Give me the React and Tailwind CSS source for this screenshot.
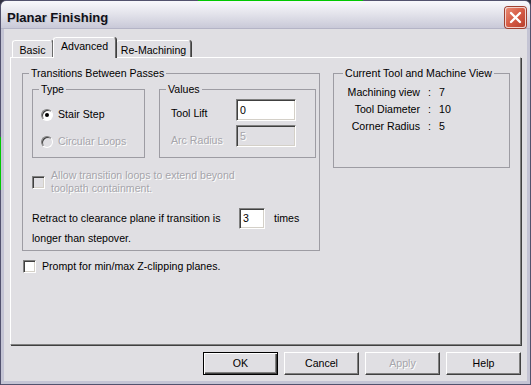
import React from 'react';

const disabled = 'text-[#a6a5ab] [text-shadow:1px_1px_0_#ffffff]';

function GroupBox({ title, className = '', legendClass = 'ml-[6px]', children }) {
  return (
    <fieldset className={`border border-[#9d9ca3] p-0 m-0 min-w-0 ${className}`}>
      <legend className={`${legendClass} px-[2px] leading-[13px]`}>{title}</legend>
      {children}
    </fieldset>
  );
}

function Radio({ checked, off, label }) {
  return (
    <div className="flex items-center h-[13px] gap-[5px]">
      <span
        className={`relative w-[12px] h-[12px] rounded-full border border-t-[#808080] border-l-[#808080] border-r-white border-b-white shadow-[inset_1px_1px_0_#404040] flex items-center justify-center ${
          off ? 'bg-[#e0dfe3]' : 'bg-white'
        }`}
      >
        {checked && <span className="w-[4px] h-[4px] rounded-full bg-black" />}
      </span>
      <span className={off ? disabled : ''}>{label}</span>
    </div>
  );
}

function Check({ off }) {
  return (
    <span
      className={`shrink-0 w-[13px] h-[13px] border border-t-[#808080] border-l-[#808080] border-r-white border-b-white shadow-[inset_1px_1px_0_#404040,inset_-1px_-1px_0_#d4d0c8] ${
        off ? 'bg-[#e0dfe3]' : 'bg-white'
      }`}
    />
  );
}

function Field({ value, off, className = '' }) {
  return (
    <div
      className={`border border-t-[#808080] border-l-[#808080] border-r-white border-b-white shadow-[inset_1px_1px_0_#404040,inset_-1px_-1px_0_#d4d0c8] pl-[3px] ${
        off ? `bg-[#e0dfe3] ${disabled}` : 'bg-white'
      } ${className}`}
    >
      {value}
    </div>
  );
}

function Button({ label, primary, off }) {
  return (
    <button
      className={`w-[75px] h-[23px] text-center leading-[19px] bg-[#e0dfe3] ${
        primary
          ? 'border border-black shadow-[inset_1px_1px_0_#ffffff,inset_-1px_-1px_0_#404040,inset_-2px_-2px_0_#808080]'
          : 'border border-t-white border-l-white border-r-[#404040] border-b-[#404040] shadow-[inset_-1px_-1px_0_#808080]'
      }`}
    >
      <span className={off ? disabled : ''}>{label}</span>
    </button>
  );
}

function Tab({ label, active, className = '' }) {
  return (
    <div
      className={`whitespace-nowrap text-center rounded-t-[3px] border-t border-l border-r border-t-white border-l-white border-r-[#6a6a6a] shadow-[1px_0_0_#404040] bg-[#e0dfe3] ${
        active ? 'h-[21px] -mb-px relative z-10 pt-[2px]' : 'h-[17px] pt-[3px]'
      } ${className}`}
    >
      {label}
    </div>
  );
}

export default function App() {
  return (
    <div className="relative w-[531px] h-[385px] bg-[#303040] [font-family:Liberation_Sans,Arial,sans-serif] text-[10.6px] leading-[13px] text-black">
      <div className="w-[531px] h-[385px] flex flex-col border border-[#52526e] rounded-t-[6px] overflow-hidden">
        {/* Title bar */}
        <div className="h-[28px] shrink-0 flex items-start justify-between pl-[6px] pr-[4px] pt-[6px] bg-gradient-to-b from-[#f8f8fc] via-[#e2e2ea] to-[#c9c9d8] border-b border-[#b4b4c6]">
          <span className="font-bold text-[13px] leading-[21px] text-[#101018] [text-shadow:1px_1px_0_#c8c8d0]">
            Planar Finishing
          </span>
          <span className="w-[21px] h-[21px] rounded-[3px] border border-[#f2d2cc] bg-gradient-to-br from-[#e88a74] via-[#d55a44] to-[#b8402e] shadow-[0_0_0_1px_#a04030] flex items-center justify-center">
            <svg width="13" height="13" viewBox="0 0 13 13">
              <path d="M2 2 L11 11 M11 2 L2 11" stroke="#ffffff" strokeWidth="2.4" strokeLinecap="round" />
            </svg>
          </span>
        </div>

        {/* Dialog body */}
        <div className="flex-1 flex flex-col bg-[#e0dfe3] border-x-[3px] border-b-[3px] border-[#c4c4d4] pt-[8px] px-[6px] pb-[6px]">
          {/* Tabs */}
          <div className="h-[20px] flex items-end pl-[2px]">
            <Tab label="Basic" className="w-[41px]" />
            <Tab label="Advanced" active className="w-[63px]" />
            <Tab label="Re-Machining" className="w-[75px]" />
          </div>

          {/* Tab panel */}
          <div className="h-[288px] border border-t-white border-l-white border-r-[#808080] border-b-[#808080] shadow-[1px_1px_0_#404040] pt-[9px] pl-[11px] flex items-start gap-[13px]">
            <div className="flex flex-col w-[298px]">
              <GroupBox title="Transitions Between Passes" className="w-[298px] h-[184px]">
                <div className="pl-[9px] flex flex-col">
                  <div className="flex gap-[14px] mt-[3px]">
                    <GroupBox title="Type" className="w-[113px] h-[75px]">
                      <div className="pl-[8px] pt-[12px] flex flex-col gap-[14px]">
                        <Radio checked label="Stair Step" />
                        <Radio off label="Circular Loops" />
                      </div>
                    </GroupBox>
                    <GroupBox title="Values" className="w-[157px] h-[75px]">
                      <div className="pl-[11px] pt-[3px] grid grid-cols-[65px_60px] gap-y-[4px]">
                        <span className="pt-[8px]">Tool Lift</span>
                        <Field value="0" className="h-[22px] leading-[20px]" />
                        <span className={`pt-[9px] ${disabled}`}>Arc Radius</span>
                        <Field value="5" off className="h-[22px] leading-[20px]" />
                      </div>
                    </GroupBox>
                  </div>

                  <div className="flex items-center gap-[6px] mt-[11px]">
                    <Check off />
                    <span className={disabled}>
                      Allow transition loops to extend beyond
                      <br />
                      toolpath containment.
                    </span>
                  </div>

                  <div className="flex items-center mt-[13px]">
                    <span className="w-[207px]">Retract to clearance plane if transition is</span>
                    <Field value="3" className="w-[26px] h-[21px] leading-[19px]" />
                    <span className="ml-[9px]">times</span>
                  </div>
                  <div className="mt-[3px]">longer than stepover.</div>
                </div>
              </GroupBox>

              <div className="flex items-center gap-[6px] mt-[9px] ml-px">
                <Check />
                <span>Prompt for min/max Z-clipping planes.</span>
              </div>
            </div>

            <GroupBox title="Current Tool and Machine View" legendClass="ml-[9px]" className="w-[177px] h-[101px]">
              <div className="pt-[6px] grid grid-cols-[86px_12px_auto] gap-y-[4px]">
                <span className="text-right">Machining view</span>
                <span className="pl-[8px]">:</span>
                <span className="pl-[7px]">7</span>
                <span className="text-right">Tool Diameter</span>
                <span className="pl-[8px]">:</span>
                <span className="pl-[7px]">10</span>
                <span className="text-right">Corner Radius</span>
                <span className="pl-[8px]">:</span>
                <span className="pl-[7px]">5</span>
              </div>
            </GroupBox>
          </div>

          {/* Buttons */}
          <div className="mt-[7px] flex justify-end gap-[6px]">
            <Button label="OK" primary />
            <Button label="Cancel" />
            <Button label="Apply" off />
            <Button label="Help" />
          </div>
        </div>
      </div>

      {/* stray desktop pixels behind the window */}
      <div className="absolute top-0 left-[198px] w-[165px] h-px bg-[#00c800]" />
      <div className="absolute top-[137px] left-0 w-px h-[53px] bg-[#00c800]" />
    </div>
  );
}
